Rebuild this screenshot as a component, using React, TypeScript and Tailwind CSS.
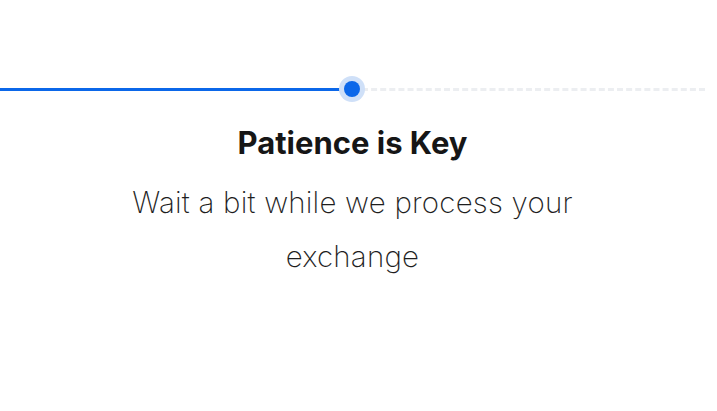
export default function App() {
  return (
    <div
      className="w-[717px] h-[411px] bg-white overflow-hidden"
      style={{ fontFamily: "Inter, 'Noto Sans', sans-serif" }}
    >
      <div className="w-[705px] flex flex-col items-center">
        {/* progress track */}
        <div className="w-full h-[26px] mt-[76px] flex items-center">
          <div className="h-[3px] bg-[#0b67e9] w-[342px]" />
          <div className="w-[26px] h-[26px] rounded-full bg-[#cfe0f8] flex items-center justify-center shrink-0 -mx-[3px] relative">
            <div className="w-[16px] h-[16px] rounded-full bg-[#0b67e9]" />
          </div>
          <div className="flex-1 h-[3px] border-t-[3px] border-dashed border-[#eceef1]" />
        </div>
        <h1 className="mt-[21px] text-[31px] leading-[40px] font-bold text-[#161616]">
          Patience is Key
        </h1>
        <p className="mt-[12px] w-[480px] text-center text-[29.5px] leading-[54px] tracking-[0.2px] font-extralight text-[#1e1e1e]">
          Wait a bit while we process your exchange
        </p>
      </div>
    </div>
  );
}
